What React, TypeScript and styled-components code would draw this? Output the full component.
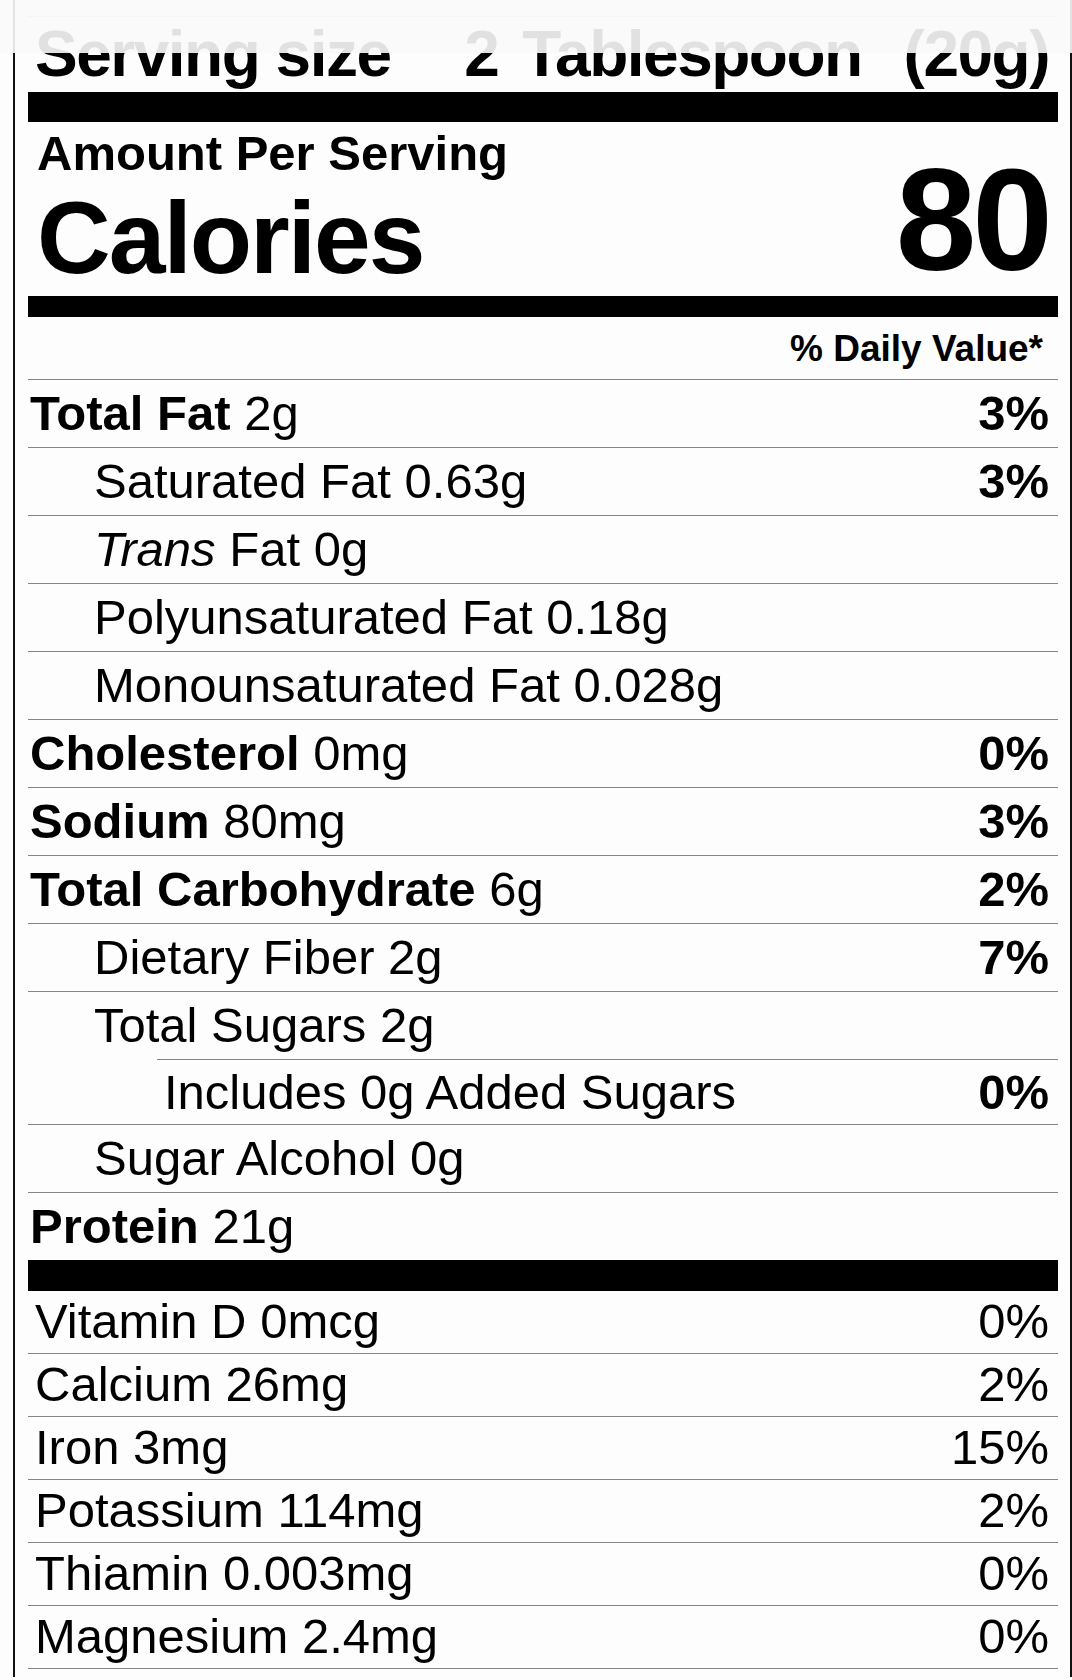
import React from "react";
import styled, { createGlobalStyle } from "styled-components";

interface Nutrient {
  name: string;
  amount: string;
  dv?: string;
  level: 0 | 1 | 2;
  italicName?: boolean;
}

interface Vitamin {
  name: string;
  amount: string;
  dv: string;
}

const nutrients: Nutrient[] = [
  { name: "Total Fat", amount: "2g", dv: "3%", level: 0 },
  { name: "Saturated Fat", amount: "0.63g", dv: "3%", level: 1 },
  { name: "Trans", amount: "Fat 0g", level: 1, italicName: true },
  { name: "Polyunsaturated Fat", amount: "0.18g", level: 1 },
  { name: "Monounsaturated Fat", amount: "0.028g", level: 1 },
  { name: "Cholesterol", amount: "0mg", dv: "0%", level: 0 },
  { name: "Sodium", amount: "80mg", dv: "3%", level: 0 },
  { name: "Total Carbohydrate", amount: "6g", dv: "2%", level: 0 },
  { name: "Dietary Fiber", amount: "2g", dv: "7%", level: 1 },
  { name: "Total Sugars", amount: "2g", level: 1 },
  { name: "Includes 0g Added Sugars", amount: "", dv: "0%", level: 2 },
  { name: "Sugar Alcohol", amount: "0g", level: 1 },
  { name: "Protein", amount: "21g", level: 0 },
];

const vitamins: Vitamin[] = [
  { name: "Vitamin D", amount: "0mcg", dv: "0%" },
  { name: "Calcium", amount: "26mg", dv: "2%" },
  { name: "Iron", amount: "3mg", dv: "15%" },
  { name: "Potassium", amount: "114mg", dv: "2%" },
  { name: "Thiamin", amount: "0.003mg", dv: "0%" },
  { name: "Magnesium", amount: "2.4mg", dv: "0%" },
];

const GlobalStyle = createGlobalStyle`
  html, body {
    margin: 0;
    padding: 0;
    background: #fdfdfd;
  }
  body {
    font-family: "Liberation Sans", Arial, Helvetica, sans-serif;
    color: #000;
  }
`;

const Page = styled.div`
  padding-left: 13px;
`;

// translucent sticky bar the label scrolls under
const TopBar = styled.div`
  position: fixed;
  top: 0;
  left: 0;
  right: 0;
  height: 53px;
  background: rgba(250, 250, 250, 0.9);
  z-index: 2;
`;

const Label = styled.section`
  width: 1059px;
  box-sizing: border-box;
  border-left: 2px solid #111;
  border-right: 2px solid #111;
  padding: 16px 12px 8px 13px;
`;

const ServingRow = styled.div`
  display: flex;
  justify-content: space-between;
  align-items: baseline;
  border-top: 1px solid #c8c8c8;
  padding: 0 9px 0 7px;
  font-size: 64px;
  font-weight: 700;
  line-height: 75px;
  letter-spacing: -1.5px;
  white-space: nowrap;
`;

const ServingValue = styled.span`
  display: flex;
  gap: 24px;

  & > span:last-child {
    margin-left: 18px;
  }
`;

const Bar = styled.div<{ $h: number }>`
  height: ${(p) => p.$h}px;
  background: #000;
`;

const CaloriesBlock = styled.div`
  display: flex;
  justify-content: space-between;
  align-items: flex-end;
  padding: 7px 9px 9px 9px;
`;

const CaloriesLeft = styled.div`
  display: flex;
  flex-direction: column;
`;

const AmountLabel = styled.div`
  font-size: 49px;
  font-weight: 700;
  line-height: 48px;
`;

const CaloriesLabel = styled.div`
  margin-top: 12px;
  font-size: 102px;
  font-weight: 700;
  line-height: 98px;
  letter-spacing: -2px;
`;

const CaloriesValue = styled.div`
  font-size: 145px;
  font-weight: 700;
  line-height: 134px;
  letter-spacing: -4px;
`;

const DailyValueHead = styled.div`
  text-align: right;
  padding: 5px 15px 3px 0;
  font-size: 37px;
  font-weight: 700;
  line-height: 54px;
`;

const NutrientRow = styled.div<{ $level: number }>`
  display: flex;
  justify-content: space-between;
  box-sizing: border-box;
  height: ${(p) => (p.$level === 2 ? 65 : 68)}px;
  margin-left: ${(p) => (p.$level === 2 ? 129 : 0)}px;
  padding: 0 9px 0 ${(p) => (p.$level === 0 ? 2 : p.$level === 1 ? 66 : 7)}px;
  border-top: 1px solid #858585;
  font-size: 49px;
  line-height: ${(p) => (p.$level === 2 ? 64 : 67)}px;
  white-space: nowrap;
`;

const Name = styled.span<{ $bold: boolean }>`
  font-weight: ${(p) => (p.$bold ? 700 : 400)};
`;

const Italic = styled.i`
  font-style: italic;
`;

const Percent = styled.span<{ $bold: boolean }>`
  font-weight: ${(p) => (p.$bold ? 700 : 400)};
`;

const VitaminRow = styled.div`
  display: flex;
  justify-content: space-between;
  box-sizing: border-box;
  height: 63px;
  padding: 0 9px 0 7px;
  border-bottom: 1px solid #858585;
  font-size: 49px;
  line-height: 60px;
  white-space: nowrap;
`;

function NutrientLine({ item }: { item: Nutrient }) {
  return (
    <NutrientRow $level={item.level}>
      <span>
        {item.italicName ? (
          <Italic>{item.name}</Italic>
        ) : (
          <Name $bold={item.level === 0}>{item.name}</Name>
        )}
        {item.amount ? ` ${item.amount}` : ""}
      </span>
      {item.dv && <Percent $bold>{item.dv}</Percent>}
    </NutrientRow>
  );
}

export default function App() {
  return (
    <Page>
      <GlobalStyle />
      <TopBar />
      <Label>
        <ServingRow>
          <span>Serving size</span>
          <ServingValue>
            <span>2</span>
            <span>Tablespoon</span>
            <span>(20g)</span>
          </ServingValue>
        </ServingRow>
        <Bar $h={30} />
        <CaloriesBlock>
          <CaloriesLeft>
            <AmountLabel>Amount Per Serving</AmountLabel>
            <CaloriesLabel>Calories</CaloriesLabel>
          </CaloriesLeft>
          <CaloriesValue>80</CaloriesValue>
        </CaloriesBlock>
        <Bar $h={21} />
        <DailyValueHead>% Daily Value*</DailyValueHead>
        {nutrients.map((n) => (
          <NutrientLine key={n.name} item={n} />
        ))}
        <Bar $h={31} />
        {vitamins.map((v) => (
          <VitaminRow key={v.name}>
            <span>
              {v.name} {v.amount}
            </span>
            <Percent $bold={false}>{v.dv}</Percent>
          </VitaminRow>
        ))}
      </Label>
    </Page>
  );
}
